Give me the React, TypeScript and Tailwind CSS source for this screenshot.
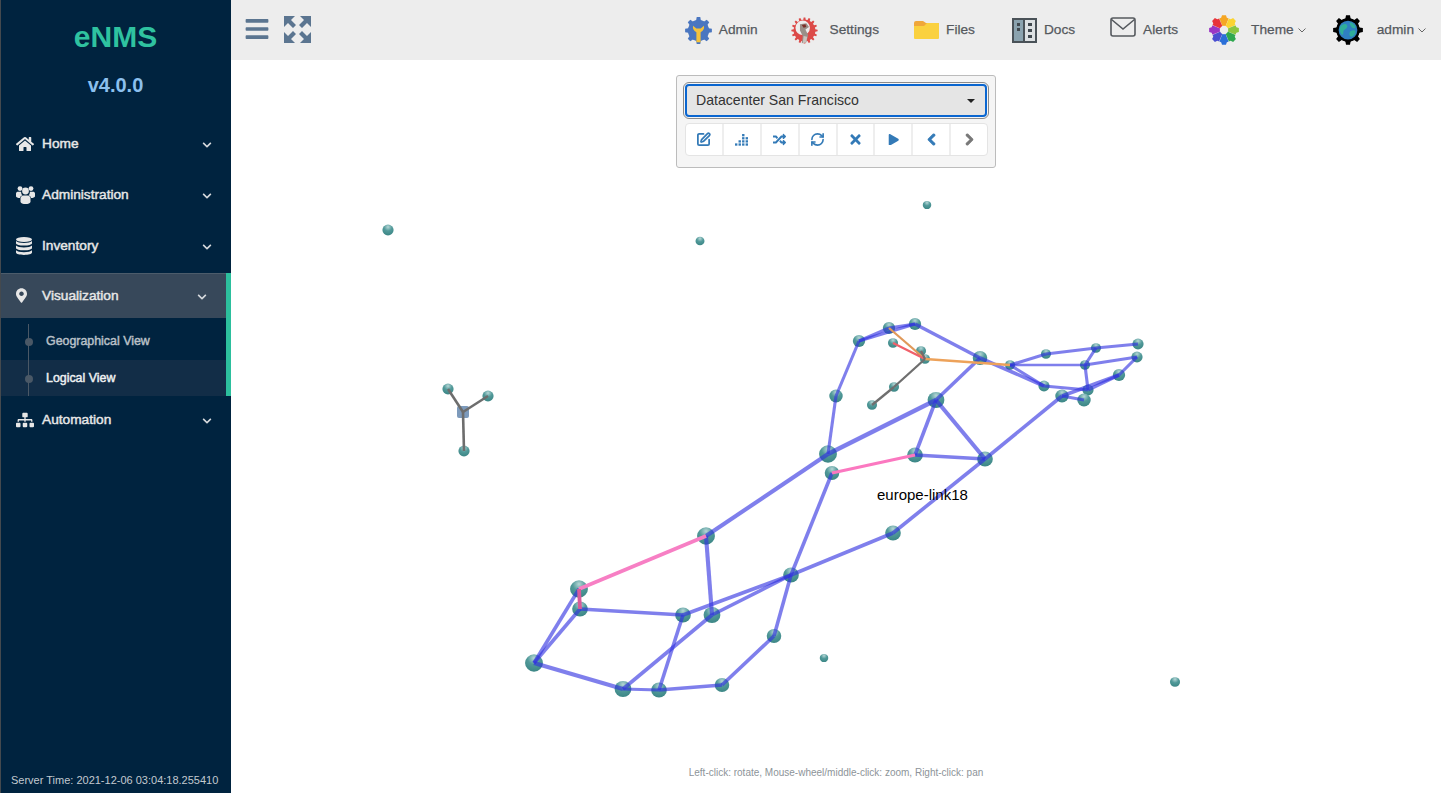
import type { ReactNode } from "react";
import { RefreshCw, SquarePen } from "lucide-react";
import {
  FaBars,
  FaChevronDown,
  FaChevronLeft,
  FaChevronRight,
  FaHome,
  FaMapMarkerAlt,
  FaPlay,
  FaRandom,
  FaSitemap,
  FaTimes,
} from "react-icons/fa";

// gear outline centred in a 32x32 box
function gearPath(teeth: number, outer: number, inner: number) {
  const step = (Math.PI * 2) / teeth;
  const pts: string[] = [];
  for (let i = 0; i < teeth; i++) {
    const a = i * step;
    const w = step * 0.24;
    [
      [a - w * 1.2, inner],
      [a - w * 0.7, outer],
      [a + w * 0.7, outer],
      [a + w * 1.2, inner],
    ].forEach(([t, r]) => {
      pts.push(`${(16 + Math.cos(t) * r).toFixed(2)} ${(16 + Math.sin(t) * r).toFixed(2)}`);
    });
  }
  return `M${pts.join("L")}Z`;
}

function AdminIcon() {
  return (
    <svg viewBox="0 0 32 32" className="h-[27px] w-[27px]">
      <path d={gearPath(8, 16, 12.5)} fill="#4a76c0" />
      <circle cx="16" cy="16" r="12.5" fill="#4a76c0" />
      <path
        d="M9.5 10.5a7 7 0 0 0 4 7.5v12h5V18a7 7 0 0 0 4-7.5l-4 3h-5z"
        fill="#f4c23c"
      />
    </svg>
  );
}

function SettingsIcon() {
  return (
    <svg viewBox="0 0 32 32" className="h-[29px] w-[29px]">
      <path d={gearPath(16, 14.5, 12)} fill="#dc4a48" />
      <circle cx="14" cy="13" r="8" fill="#ededed" />
      <path d="M11 9l7-1 3 4-4 3 3 6-2 8-5 1 1-8-3-6z" fill="#9a8f88" />
      <path d="M13 10l4-1 1 3-3 1z" fill="#7c2f28" />
      <path d="M15 22l4 1-1 6-4 1z" fill="#c9c3bd" />
    </svg>
  );
}

function FolderIcon() {
  return (
    <svg viewBox="0 0 27 20" className="h-[20px] w-[27px]">
      <path d="M1 3a2 2 0 0 1 2-2h7l3 2h12a1 1 0 0 1 1 1v3H1z" fill="#f0a73a" />
      <path d="M1 6h10l3-3h11a1 1 0 0 1 1 1v14a1 1 0 0 1-1 1H2a1 1 0 0 1-1-1z" fill="#fad13f" />
    </svg>
  );
}

function DocsIcon() {
  return (
    <svg viewBox="0 0 25 25" className="h-[25px] w-[25px]">
      <rect x="0" y="0" width="25" height="25" fill="#4a5258" />
      <rect x="2" y="2" width="9" height="21" fill="#8ba3af" />
      <rect x="13" y="2" width="10" height="21" fill="#dde1e3" />
      <rect x="5" y="5" width="3" height="3" fill="#41494f" />
      <rect x="5" y="10" width="3" height="3" fill="#41494f" />
      <rect x="16" y="5" width="4" height="3" fill="#41494f" />
      <rect x="16" y="11" width="4" height="3" fill="#41494f" />
      <rect x="16" y="17" width="4" height="3" fill="#41494f" />
    </svg>
  );
}

function AlertsIcon() {
  return (
    <svg viewBox="0 0 26 20" className="mb-[6px] h-[20px] w-[26px]" fill="none" stroke="#55595e" strokeWidth="1.6">
      <rect x="1" y="1" width="24" height="18" rx="2" />
      <path d="M1.5 2.5L13 12 24.5 2.5" />
    </svg>
  );
}

function ThemeIcon() {
  // clockwise from the top, each colour fills one 45 degree slice of the gear
  const colors = ["#f5a623", "#fbd431", "#8bc63f", "#2fa84f", "#2a6fd8", "#4a4fd0", "#9a37c4", "#e8343a"];
  return (
    <svg viewBox="0 0 32 32" className="h-[30px] w-[30px]">
      <clipPath id="themeGear">
        <path d={gearPath(8, 16, 13.5)} />
      </clipPath>
      <g clipPath="url(#themeGear)">
        {colors.map((c, i) => (
          <path key={c} d="M16 16L8 -4H24Z" fill={c} transform={`rotate(${i * 45} 16 16)`} />
        ))}
      </g>
      <circle cx="16" cy="16" r="4.5" fill="#ededed" />
    </svg>
  );
}

function UserGearIcon() {
  return (
    <svg viewBox="0 0 32 32" className="h-[30px] w-[30px]">
      <path d={gearPath(8, 16, 12.5)} fill="#000" />
      <circle cx="16" cy="16" r="12.5" fill="#000" />
      <circle cx="16" cy="16" r="10" fill="#2f7fc2" />
      <path d="M8 12c3-3 6-3 7-1s-1 4-3 5 0 5-2 5-4-6-2-9z" fill="#2fae9a" />
      <path d="M18 8c3 0 6 3 6 5s-3 1-4 0-3-4-2-5z" fill="#2fae9a" />
      <path d="M19 17c2-1 5-1 5 1s-3 6-5 5-2-5 0-6z" fill="#2fae9a" />
    </svg>
  );
}

function ExpandIcon() {
  const arrow = "M0 0h11l-4 4 5 5-3 3-5-5-4 4z";
  return (
    <svg viewBox="0 0 27 27" className="ml-[15px] h-[27px] w-[27px]" fill="#5b7590">
      <path d={arrow} />
      <path d={arrow} transform="rotate(90 13.5 13.5)" />
      <path d={arrow} transform="rotate(180 13.5 13.5)" />
      <path d={arrow} transform="rotate(270 13.5 13.5)" />
    </svg>
  );
}

function UsersIcon() {
  return (
    <svg viewBox="0 0 19 18" className="h-[18px] w-[19px]" fill="#e7e7e7">
      <circle cx="4" cy="2.6" r="2.4" />
      <circle cx="15" cy="2.6" r="2.4" />
      <circle cx="9.5" cy="5" r="3.4" />
      <path d="M0 7.5c0-1.2 1-1.8 2-1.8h3.2c-.2 1.6.3 2.8 1.3 3.6-1.4.6-2.2 1.4-2.6 2.7C2 12 0 11.4 0 10.2zM19 7.5c0-1.2-1-1.8-2-1.8h-3.2c.2 1.6-.3 2.8-1.3 3.6 1.4.6 2.2 1.4 2.6 2.7 1.9 0 3.9-.6 3.9-1.8z" />
      <path d="M4.5 12.5c0-1.6 1.2-3 3-3h4c1.8 0 3 1.4 3 3v3.2c0 1.5-2.5 2.3-5 2.3s-5-.8-5-2.3z" />
    </svg>
  );
}

function DatabaseIcon() {
  return (
    <svg viewBox="0 0 16 18" className="h-[18px] w-[16px]" fill="#e7e7e7">
      <ellipse cx="8" cy="2.5" rx="8" ry="2.5" />
      <path d="M0 4v2.2C0 7.6 3.6 8.6 8 8.6s8-1 8-2.4V4c-1 1.3-4.3 2-8 2S1 5.3 0 4z" />
      <path d="M0 8.6v2.3c0 1.4 3.6 2.4 8 2.4s8-1 8-2.4V8.6c-1 1.3-4.3 2-8 2s-7-.7-8-2z" />
      <path d="M0 13.3v2.3C0 17 3.6 18 8 18s8-1 8-2.4v-2.3c-1 1.3-4.3 2-8 2s-7-.7-8-2z" />
    </svg>
  );
}

function TasksIcon() {
  const cells = [
    [0, 9], [3.4, 6], [3.4, 9], [6.8, 0], [6.8, 3], [6.8, 6], [6.8, 9], [10.2, 3], [10.2, 6], [10.2, 9],
  ];
  return (
    <svg viewBox="0 0 12.5 11.5" className="h-[12px] w-[13px]" fill="#337ab7">
      {cells.map(([x, y]) => (
        <rect key={`${x}-${y}`} x={x} y={y} width="2.3" height="2.2" />
      ))}
    </svg>
  );
}

const nodes: Record<string, [number, number, number]> = {
  iso1: [388, 230, 5], iso2: [927, 205, 3.8], iso3: [700, 241, 4], iso4: [824, 658, 3.8], iso5: [1175, 682, 4.5],
  y1: [448, 389, 5], y2: [488, 396, 5], y4: [464, 451, 5],
  A: [859, 341, 5.5], B: [889, 328, 5.5], C: [915, 324, 5.5], D: [893, 343, 4.5], E: [921, 351, 4.5], F: [925, 359, 4.5],
  G: [980, 358, 6.5], H: [1010, 365, 4.5], I: [1046, 354, 4.5], J: [1096, 348, 4.5], K: [1138, 344, 5], L: [1137, 357, 5],
  M: [1085, 365, 4.5], N: [1119, 375, 5.5], O: [1088, 390, 5], P: [1044, 386, 5], Q: [1062, 396, 6], R: [1084, 400, 6],
  S: [894, 387, 4.5], T: [872, 405, 4.5], U: [836, 396, 6], V: [936, 400, 7.5], W: [828, 454, 8], X: [832, 473, 6.5],
  Y: [915, 455, 7], Z: [985, 459, 7], AA: [893, 533, 7],
  a: [706, 536, 8], b: [579, 589, 8], c: [580, 609, 7], d: [683, 615, 7], e: [712, 615, 7.5], f: [791, 575, 7],
  g: [774, 636, 6.5], h: [534, 663, 8], i: [623, 689, 7.5], j: [659, 690, 7], k: [722, 685, 6.5],
};

const blueEdges: [string, string, number][] = [
  ["A", "B", 2.5], ["A", "C", 2.5], ["B", "C", 2.5], ["C", "G", 3], ["A", "U", 2.5], ["U", "W", 2.5], ["W", "V", 4],
  ["V", "G", 3], ["V", "Y", 3], ["V", "Z", 3.5], ["Y", "Z", 3], ["G", "P", 3], ["H", "I", 2.5], ["H", "M", 2], ["H", "P", 2.5],
  ["I", "J", 2.5], ["J", "K", 2.5], ["J", "M", 2.5], ["M", "L", 2.5], ["L", "N", 2.5], ["M", "O", 2.5], ["P", "O", 2.5],
  ["Q", "N", 3], ["Q", "R", 2.5], ["O", "N", 3], ["Q", "Z", 3], ["W", "a", 3.5], ["X", "f", 3], ["Z", "AA", 3], ["AA", "f", 3],
  ["a", "e", 3.5], ["f", "d", 3], ["f", "e", 3], ["f", "g", 3], ["g", "k", 3], ["k", "j", 3], ["j", "i", 2.5], ["j", "d", 3],
  ["i", "e", 3], ["i", "h", 3.5], ["h", "b", 3], ["h", "c", 3], ["c", "d", 3],
];

const otherEdges: [string, string, number, string][] = [
  ["B", "F", 2, "#e0995a"], ["F", "H", 2, "#eda25a"], ["D", "F", 2, "#f0606a"],
  ["F", "S", 2, "#6f6f6f"], ["S", "T", 2, "#6f6f6f"], ["E", "F", 2, "#7a6a6a"],
  ["X", "Y", 3, "#fb78c0"], ["a", "b", 3.5, "#f77fc4"], ["b", "c", 3.5, "#d85a9a"],
];

function NetworkGraph() {
  return (
    <svg className="absolute left-[-231px] top-[-60px] h-[793px] w-[1441px] blur-[0.4px]" viewBox="0 0 1441 793">
      <defs>
        <radialGradient id="node" cx="50%" cy="22%" r="80%">
          <stop offset="0%" stopColor="#b6d6d6" />
          <stop offset="45%" stopColor="#529a9a" />
          <stop offset="100%" stopColor="#3a8584" />
        </radialGradient>
      </defs>
      {Object.entries(nodes).map(([id, [x, y, r]]) => (
        <ellipse key={id} cx={x} cy={y} rx={r * 1.12} ry={r * 1.08} fill="url(#node)" />
      ))}
      <rect x="457" y="406" width="12" height="12" rx="2" fill="#7d9abb" />
      <g stroke="#6d6d6d" strokeWidth="2.6">
        <line x1="448" y1="389" x2="463" y2="412" />
        <line x1="488" y1="396" x2="463" y2="412" />
        <line x1="463" y1="412" x2="464" y2="451" />
      </g>
      {blueEdges.map(([p, q, w]) => (
        <line
          key={p + q}
          x1={nodes[p][0]}
          y1={nodes[p][1]}
          x2={nodes[q][0]}
          y2={nodes[q][1]}
          stroke="#3030e0"
          strokeOpacity="0.62"
          strokeWidth={w + 0.6}
        />
      ))}
      {otherEdges.map(([p, q, w, c]) => (
        <line
          key={p + q}
          x1={nodes[p][0]}
          y1={nodes[p][1]}
          x2={nodes[q][0]}
          y2={nodes[q][1]}
          stroke={c}
          strokeWidth={w + 0.3}
        />
      ))}
    </svg>
  );
}

function NavItem({ icon, label, active }: { icon: ReactNode; label: string; active?: boolean }) {
  return (
    <div
      className={
        active
          ? "flex h-[45px] items-center border-t border-[#4c5c6b] bg-[#37485a] pl-[15px] pr-[19px] pt-[1px] text-[#e7e7e7]"
          : "flex h-[51px] items-center pl-[15px] pr-[19px] text-[#e7e7e7]"
      }
    >
      <span className="flex w-[26px] justify-start pb-[2px] text-[18px]">{icon}</span>
      <span className="flex-1 text-[13.7px] [-webkit-text-stroke:0.45px_#e7e7e7]">{label}</span>
      <FaChevronDown className="text-[10px] text-[#d5d9dd]" />
    </div>
  );
}

function SubItem({ label, current }: { label: string; current?: boolean }) {
  return (
    <div
      className={
        current
          ? "relative flex h-[36px] items-center bg-[#122d47] pl-[45px] text-[12.4px] text-[#eef0f2] [-webkit-text-stroke:0.45px_#eef0f2]"
          : "relative flex h-[42px] items-center pl-[45px] pt-[5px] text-[12.4px] text-[#b9c0c7] [-webkit-text-stroke:0.45px_#b9c0c7]"
      }
    >
      <span className={current ? "absolute left-[24px] top-[15px] h-[8px] w-[8px] rounded-full bg-[#4a5866]" : "absolute left-[24px] top-[20px] h-[8px] w-[8px] rounded-full bg-[#4a5866]"} />
      {label}
    </div>
  );
}

function Sidebar() {
  return (
    <aside className="flex h-full w-[231px] shrink-0 flex-col border-l border-[#44494e] bg-[#00233f]">
      <div className="flex h-[119px] flex-col items-center pr-[1px]">
        <div className="mt-[19px] text-[30px] font-bold leading-[36px] text-[#2fc2a0]">eNMS</div>
        <div className="mt-[12px] text-[20px] font-bold leading-[36px] text-[#8cc0ee]">v4.0.0</div>
      </div>
      <NavItem icon={<FaHome />} label="Home" />
      <NavItem icon={<UsersIcon />} label="Administration" />
      <NavItem icon={<DatabaseIcon />} label="Inventory" />
      <div className="relative mt-[1px] border-r-[5px] border-[#2cbf9d]">
        <NavItem active icon={<FaMapMarkerAlt className="h-[17px] w-[11px]" />} label="Visualization" />
        <div className="relative">
          <span className="absolute left-[27px] top-[6px] z-10 h-[72px] w-px bg-[#4a5866]" />
          <SubItem label="Geographical View" />
          <SubItem current label="Logical View" />
        </div>
      </div>
      <div className="-mt-[1px]">
        <NavItem icon={<FaSitemap />} label="Automation" />
      </div>
      <div className="mt-auto pb-[5px] pl-[10px] text-[11px] leading-[16px] text-[#c3c9cf]">
        Server Time: 2021-12-06 03:04:18.255410
      </div>
    </aside>
  );
}

function TopLink({ icon, label, gap, left, caret }: { icon: ReactNode; label: string; gap: string; left: string; caret?: boolean }) {
  return (
    <div className={`flex items-center ${left}`}>
      {icon}
      <span className={`text-[13.7px] text-[#55595e] [-webkit-text-stroke:0.25px_#55595e] ${gap}`}>{label}</span>
      {caret && (
        <svg viewBox="0 0 8 5" className="ml-[4px] h-[5px] w-[8px]" fill="none" stroke="#666" strokeWidth="1">
          <path d="M.5.5L4 4 7.5.5" />
        </svg>
      )}
    </div>
  );
}

function Header() {
  return (
    <header className="flex h-[60px] shrink-0 items-center bg-[#ededed] pr-[15px]">
      <div className="flex items-center pb-[2px]">
        <FaBars className="ml-[14px] h-[26px] w-[24px] text-[#5b7590]" />
        <ExpandIcon />
      </div>
      <div className="ml-auto flex items-center">
        <TopLink icon={<AdminIcon />} label="Admin" gap="ml-[7px]" left="" />
        <TopLink icon={<SettingsIcon />} label="Settings" gap="ml-[11px]" left="ml-[32px]" />
        <TopLink icon={<FolderIcon />} label="Files" gap="ml-[6px]" left="ml-[34px]" />
        <TopLink icon={<DocsIcon />} label="Docs" gap="ml-[7px]" left="ml-[37px]" />
        <TopLink icon={<AlertsIcon />} label="Alerts" gap="ml-[7px]" left="ml-[35px]" />
        <TopLink icon={<ThemeIcon />} label="Theme" gap="ml-[12px]" left="ml-[31px]" caret />
        <TopLink icon={<UserGearIcon />} label="admin" gap="ml-[14px]" left="ml-[27px]" caret />
      </div>
    </header>
  );
}

function Controls() {
  const tools = [
    <SquarePen key="edit" size={15} strokeWidth={2.8} />,
    <TasksIcon key="tasks" />,
    <FaRandom key="random" />,
    <RefreshCw key="sync" size={15} strokeWidth={2.6} />,
    <FaTimes key="times" className="text-[15px]" />,
    <FaPlay key="play" className="text-[11.5px]" />,
    <FaChevronLeft key="left" stroke="currentColor" strokeWidth={40} />,
    <FaChevronRight key="right" stroke="currentColor" strokeWidth={40} className="text-[#777]" />,
  ];
  return (
    <div className="absolute left-[445px] top-[15px] h-[93px] w-[320px] rounded-[3px] border border-[#bcbcbc] bg-[#f5f5f5] px-[8px] pt-[8px]">
      <div className="flex h-[33px] items-center justify-between rounded-[4px] border-2 border-[#0a66d0] bg-[#e5e5e5] pl-[9px] pr-[10px] text-[14.1px] text-[#333] outline outline-1 outline-offset-1 outline-[#8a8a8a]">
        Datacenter San Francisco
        <span className="h-0 w-0 border-x-[4px] border-t-[4px] border-x-transparent border-t-[#222]" />
      </div>
      <div className="mt-[6px] flex h-[33px] w-[303px] rounded-[4px] border border-[#e4e4e4] bg-white">
        {tools.map((t) => (
          <div key={t.key} className="flex flex-1 items-center justify-center border-r-2 border-[#eeeeee] text-[13px] text-[#337ab7] last:border-r-0">
            {t}
          </div>
        ))}
      </div>
    </div>
  );
}

export default function App() {
  return (
    <div className="flex h-[793px] w-full overflow-hidden bg-white font-['Liberation_Sans',Arial,sans-serif]">
      <Sidebar />
      <main className="flex min-w-0 flex-1 flex-col">
        <Header />
        <div className="relative flex-1 overflow-hidden">
          <NetworkGraph />
          <Controls />
          <div className="absolute left-[646px] top-[426px] text-[15px] leading-[18px] text-black">europe-link18</div>
          <div className="absolute bottom-[13px] left-0 right-0 text-center text-[10px] leading-[14px] text-[#8d9499]">
            Left-click: rotate, Mouse-wheel/middle-click: zoom, Right-click: pan
          </div>
        </div>
      </main>
    </div>
  );
}
